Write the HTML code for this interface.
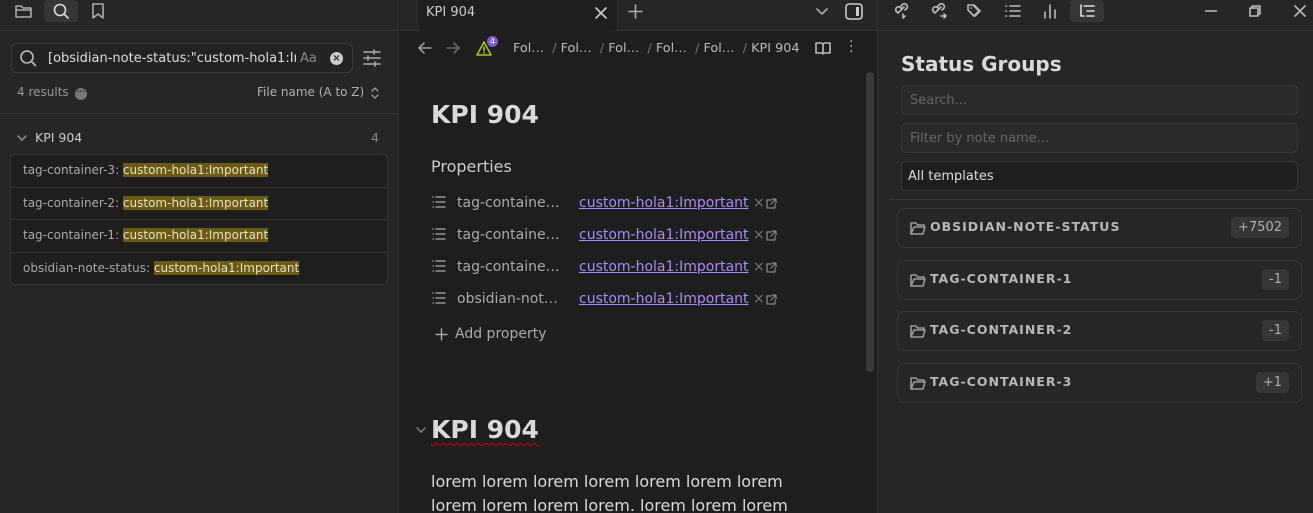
<!DOCTYPE html>
<html><head><style>
*{box-sizing:border-box;margin:0;padding:0}
html,body{width:1313px;height:513px;overflow:hidden}
body{background:#1e1e1e;font-family:"DejaVu Sans","Liberation Sans",sans-serif;color:#dadada;position:relative}
.a{position:absolute}
svg{position:absolute;fill:none;stroke:currentColor;stroke-width:1.6;stroke-linecap:round;stroke-linejoin:round}
.hl{background:#6b5a14;color:#e6e0c8}
.lnk{color:#a88bfa;text-decoration:underline}
.card{position:absolute;left:897px;width:405px;height:40px;border:1px solid #363636;border-radius:8px;background:#262626}
.card .t{position:absolute;left:32px;top:10px;font-weight:bold;font-size:12.5px;letter-spacing:1px;color:#b8b8b8}
.card .b{position:absolute;top:8px;right:12px;height:21px;padding:0 7px;background:#363636;border-radius:4px;font-size:13px;color:#b0b0b0;line-height:21px}
.card svg{left:12px;top:12px;color:#999}
</style></head><body>
<!-- left panel -->
<div class="a" style="left:0;top:0;width:399px;height:513px;background:#262626;border-right:1px solid #333"></div>
<div class="a" style="left:0;top:30px;width:399px;height:1px;background:#333"></div>
<div class="a" style="left:44px;top:0;width:34px;height:22px;background:#363636;border-radius:4px"></div>
<svg style="left:15px;top:3px;color:#aaa" width="18" height="16" viewBox="0 0 18 16"><path d="M1 3h5l2 2h8v9H1z M1 7h15"/></svg>
<svg style="left:52px;top:3px;color:#ddd" width="18" height="16" viewBox="0 0 18 16"><circle cx="8" cy="7" r="5.5"/><path d="M12 11l4 4"/></svg>
<svg style="left:90px;top:2px;color:#aaa" width="16" height="18" viewBox="0 0 16 18"><path d="M3 2h10v14l-5-4-5 4z"/></svg>
<div class="a" style="left:11px;top:43px;width:342px;height:30px;border:1px solid #3a3a3a;border-radius:6px;background:#232323"></div>
<svg style="left:19px;top:49px;color:#bbb" width="18" height="18" viewBox="0 0 18 18"><circle cx="8" cy="8" r="6"/><path d="M12.5 12.5l4 4"/></svg>
<div class="a" style="left:48px;top:51px;font-size:13px;color:#ddd;white-space:nowrap;width:248px;overflow:hidden">[obsidian-note-status:"custom-hola1:Important</div>
<div class="a" style="left:300px;top:51px;font-size:13px;color:#888">Aa</div>
<div class="a" style="left:330px;top:52px;width:13px;height:13px;border-radius:50%;background:#ccc;color:#262626;font-size:10px;line-height:13px;text-align:center;font-weight:bold">×</div>
<svg style="left:363px;top:49px;color:#aaa" width="18" height="18" viewBox="0 0 18 18"><path d="M1 3h16M1 9h16M1 15h16"/><path d="M11 1v4M5 7v4M12 13v4" /></svg>
<div class="a" style="left:17px;top:85px;font-size:12px;color:#9a9a9a">4 results</div>
<div class="a" style="left:75px;top:88px;width:12px;height:12px;border-radius:50%;background:#777;color:#333;font-size:8px;line-height:8px;text-align:center;font-weight:bold">···</div>
<div class="a" style="left:257px;top:85px;font-size:12px;color:#b0b0b0">File name (A to Z)</div>
<svg style="left:371px;top:87px;color:#999;stroke-width:1.3" width="8" height="12" viewBox="0 0 8 12"><path d="M1 4l3-3 3 3M1 8l3 3 3-3"/></svg>
<div class="a" style="left:0;top:113px;width:398px;height:1px;background:#333"></div>
<svg style="left:17px;top:134px;color:#888" width="10" height="8" viewBox="0 0 10 8"><path d="M1 2l4 4 4-4"/></svg>
<div class="a" style="left:35px;top:130px;font-size:12.5px;color:#ccc">KPI 904</div>
<div class="a" style="left:371px;top:130px;font-size:12.5px;color:#888">4</div>
<div class="a" style="left:10px;top:154px;width:378px;height:131px;background:#1e1e1e;border:1px solid #363636;border-radius:5px"></div>
<div class="a" style="left:11px;top:187px;width:376px;height:1px;background:#333"></div>
<div class="a" style="left:11px;top:219px;width:376px;height:1px;background:#333"></div>
<div class="a" style="left:11px;top:252px;width:376px;height:1px;background:#333"></div>
<div class="a" style="left:23px;top:163px;font-size:12px;color:#aaa">tag-container-3: <span class="hl">custom-hola1:Important</span></div>
<div class="a" style="left:23px;top:196px;font-size:12px;color:#aaa">tag-container-2: <span class="hl">custom-hola1:Important</span></div>
<div class="a" style="left:23px;top:228px;font-size:12px;color:#aaa">tag-container-1: <span class="hl">custom-hola1:Important</span></div>
<div class="a" style="left:23px;top:261px;font-size:12px;color:#aaa">obsidian-note-status: <span class="hl">custom-hola1:Important</span></div>

<!-- middle -->
<div class="a" style="left:400px;top:0;width:477px;height:31px;background:#262626;border-bottom:1px solid #333"></div>
<div class="a" style="left:417px;top:0;width:201px;height:32px;background:#1e1e1e;border-radius:0 0 6px 6px;border:1px solid #333;border-top:none;border-bottom:none"></div>
<div class="a" style="left:426px;top:5px;font-size:13px;color:#ccc">KPI 904</div>
<svg style="left:595px;top:7px;color:#ccc" width="12" height="12" viewBox="0 0 12 12"><path d="M1 1l10 10M11 1L1 11"/></svg>
<svg style="left:628px;top:4px;color:#aaa" width="15" height="15" viewBox="0 0 15 15"><path d="M7.5 1v13M1 7.5h13"/></svg>
<svg style="left:816px;top:8px;color:#aaa" width="12" height="8" viewBox="0 0 12 8"><path d="M1 1l5 5 5-5"/></svg>
<svg style="left:845px;top:3px;color:#ccc" width="18" height="17" viewBox="0 0 18 17"><rect x="1" y="1" width="16" height="15" rx="3"/><rect x="11" y="4" width="3" height="9" fill="#ccc" stroke="none"/></svg>
<div class="a" style="left:877px;top:0;width:1px;height:513px;background:#333"></div>
<svg style="left:418px;top:42px;color:#999" width="14" height="12" viewBox="0 0 14 12"><path d="M13 6H1M6 1L1 6l5 5"/></svg>
<svg style="left:446px;top:42px;color:#666" width="14" height="12" viewBox="0 0 14 12"><path d="M1 6h12M8 1l5 5-5 5"/></svg>
<svg style="left:476px;top:41px;color:#a5c221" width="16" height="15" viewBox="0 0 16 15"><path d="M8 1L1 14h14z M8 6v3.5M8 11.5v.5"/></svg>
<div class="a" style="left:487px;top:36px;width:11px;height:11px;border-radius:50%;background:#7e5bd6;color:#fff;font-size:8px;line-height:11px;text-align:center">4</div>
<div class="a" style="left:513px;top:41px;font-size:12.8px;color:#bbb;white-space:nowrap">Fol… <span style="color:#777">&nbsp;/</span> Fol… <span style="color:#777">&nbsp;/</span> Fol… <span style="color:#777">&nbsp;/</span> Fol… <span style="color:#777">&nbsp;/</span> Fol… <span style="color:#777">&nbsp;/</span> KPI 904</div>
<svg style="left:815px;top:42px;color:#bbb" width="16" height="13" viewBox="0 0 16 13"><path d="M1 1h5a2 2 0 0 1 2 2v9M15 1h-5a2 2 0 0 0-2 2M1 1v10h14V1"/></svg>
<div class="a" style="left:849px;top:40px;font-size:14px;color:#bbb;line-height:5px;width:4px">·<br>·<br>·</div>
<div class="a" style="left:866px;top:72px;width:8px;height:300px;background:#3a3a3a;border-radius:4px"></div>
<div class="a" style="left:431px;top:100px;font-size:25px;font-weight:bold;color:#dadada">KPI 904</div>
<div class="a" style="left:431px;top:157px;font-size:16px;color:#ccc">Properties</div>
<div class="a" style="left:432px;top:188px;line-height:32px">
<svg style="left:0;top:8px;color:#aaa;stroke-width:1.3" width="14" height="12" viewBox="0 0 14 12"><path d="M1 1h.3M1 6h.3M1 11h.3M4 1h9M4 6h9M4 11h9"/></svg>
<svg style="left:0;top:40px;color:#aaa;stroke-width:1.3" width="14" height="12" viewBox="0 0 14 12"><path d="M1 1h.3M1 6h.3M1 11h.3M4 1h9M4 6h9M4 11h9"/></svg>
<svg style="left:0;top:72px;color:#aaa;stroke-width:1.3" width="14" height="12" viewBox="0 0 14 12"><path d="M1 1h.3M1 6h.3M1 11h.3M4 1h9M4 6h9M4 11h9"/></svg>
<svg style="left:0;top:104px;color:#aaa;stroke-width:1.3" width="14" height="12" viewBox="0 0 14 12"><path d="M1 1h.3M1 6h.3M1 11h.3M4 1h9M4 6h9M4 11h9"/></svg>
</div>
<div class="a" style="left:457px;top:187px;font-size:14px;color:#aaa;line-height:32px">
<div>tag-containe…</div><div>tag-containe…</div><div>tag-containe…</div><div>obsidian-not…</div></div>
<div class="a" style="left:579px;top:187px;font-size:14px;line-height:32px">
<div><span class="lnk">custom-hola1:Important</span> <span style="color:#777">×</span></div>
<div><span class="lnk">custom-hola1:Important</span> <span style="color:#777">×</span></div>
<div><span class="lnk">custom-hola1:Important</span> <span style="color:#777">×</span></div>
<div><span class="lnk">custom-hola1:Important</span> <span style="color:#777">×</span></div></div>
<svg style="left:766px;top:198px;color:#888;stroke-width:1.2" width="11" height="11" viewBox="0 0 11 11"><path d="M5 2H1v8h8V6M6 1h4v4M10 1L5 6"/></svg>
<svg style="left:766px;top:230px;color:#888;stroke-width:1.2" width="11" height="11" viewBox="0 0 11 11"><path d="M5 2H1v8h8V6M6 1h4v4M10 1L5 6"/></svg>
<svg style="left:766px;top:262px;color:#888;stroke-width:1.2" width="11" height="11" viewBox="0 0 11 11"><path d="M5 2H1v8h8V6M6 1h4v4M10 1L5 6"/></svg>
<svg style="left:766px;top:294px;color:#888;stroke-width:1.2" width="11" height="11" viewBox="0 0 11 11"><path d="M5 2H1v8h8V6M6 1h4v4M10 1L5 6"/></svg>
<svg style="left:435px;top:328px;color:#aaa;stroke-width:1.4" width="13" height="13" viewBox="0 0 13 13"><path d="M6.5 1v11M1 6.5h11"/></svg>
<div class="a" style="left:455px;top:326px;font-size:14px;color:#aaa">Add property</div>
<svg style="left:416px;top:427px;color:#777" width="10" height="7" viewBox="0 0 10 7"><path d="M1 1l4 4 4-4"/></svg>
<div class="a" style="left:431px;top:415px;font-size:25px;font-weight:bold;color:#dadada;text-decoration:underline wavy #c00;text-decoration-thickness:1px;text-underline-offset:4px">KPI 904</div>
<div class="a" style="left:431px;top:470px;font-size:16px;color:#dadada;line-height:24px;white-space:nowrap">lorem lorem lorem lorem lorem lorem lorem<br>lorem lorem lorem lorem. lorem lorem lorem</div>

<!-- right -->
<div class="a" style="left:878px;top:0;width:435px;height:513px;background:#262626"></div>
<div class="a" style="left:878px;top:30px;width:435px;height:1px;background:#333"></div>
<div class="a" style="left:1070px;top:0;width:34px;height:22px;background:#363636;border-radius:4px"></div>
<svg style="left:893px;top:3px;color:#bbb" width="18" height="16" viewBox="0 0 18 16"><path d="M5 10l-2-2a3 3 0 0 1 4-4l2 2M8 3l2-2a3 3 0 0 1 4 4l-2 2M6 9l5-5M10 11v4M10 15l2-2"/></svg>
<svg style="left:930px;top:3px;color:#bbb" width="18" height="16" viewBox="0 0 18 16"><path d="M5 10l-2-2a3 3 0 0 1 4-4l2 2M8 3l2-2a3 3 0 0 1 4 4l-2 2M6 9l5-5M11 13h5M14 11l2 2-2 2"/></svg>
<svg style="left:967px;top:3px;color:#bbb" width="18" height="16" viewBox="0 0 18 16"><path d="M1 2v5l6 6 5-5-6-6z M7 2l6 6-5 5 M4 5h.5"/></svg>
<svg style="left:1005px;top:4px;color:#bbb" width="16" height="14" viewBox="0 0 16 14"><path d="M1 2h.5M1 7h.5M1 12h.5M5 2h10M5 7h10M5 12h10"/></svg>
<svg style="left:1043px;top:3px;color:#bbb" width="14" height="16" viewBox="0 0 14 16"><path d="M2 15V9M7 15V2M12 15V7"/></svg>
<svg style="left:1079px;top:4px;color:#ddd" width="16" height="14" viewBox="0 0 16 14"><path d="M2 1v11h3M5 2h10M8 7h7M8 12h7"/></svg>
<svg style="left:1205px;top:10px;color:#bbb" width="12" height="2" viewBox="0 0 12 2"><path d="M0 1h12"/></svg>
<svg style="left:1249px;top:5px;color:#bbb" width="12" height="12" viewBox="0 0 12 12"><rect x="1" y="3" width="8" height="8"/><path d="M3 3V1h8v8H9"/></svg>
<svg style="left:1294px;top:5px;color:#bbb" width="12" height="12" viewBox="0 0 12 12"><path d="M1 1l10 10M11 1L1 11"/></svg>
<div class="a" style="left:901px;top:52px;font-size:20px;font-weight:bold;color:#dadada">Status Groups</div>
<div class="a" style="left:901px;top:85px;width:397px;height:30px;border:1px solid #363636;border-radius:5px;background:#2a2a2a;font-size:13px;color:#666;padding:7px 8px">Search...</div>
<div class="a" style="left:901px;top:123px;width:397px;height:30px;border:1px solid #363636;border-radius:5px;background:#2a2a2a;font-size:13px;color:#666;padding:7px 8px">Filter by note name...</div>
<div class="a" style="left:901px;top:161px;width:397px;height:30px;border:1px solid #3a3a3a;border-radius:4px;background:#1e1e1e;font-size:13px;color:#ddd;padding:7px 6px">All templates</div>
<div class="a" style="left:889px;top:199px;width:424px;height:1px;background:#363636"></div>
<div class="card" style="top:208px"><svg width="16" height="14" viewBox="0 0 16 14"><path d="M1 2h5l1.5 2H14v2M1 2v11h12l2-7H4l-3 7"/></svg><div class="t">OBSIDIAN-NOTE-STATUS</div><div class="b">+7502</div></div>
<div class="card" style="top:260px"><svg width="16" height="14" viewBox="0 0 16 14"><path d="M1 2h5l1.5 2H14v2M1 2v11h12l2-7H4l-3 7"/></svg><div class="t">TAG-CONTAINER-1</div><div class="b">-1</div></div>
<div class="card" style="top:311px"><svg width="16" height="14" viewBox="0 0 16 14"><path d="M1 2h5l1.5 2H14v2M1 2v11h12l2-7H4l-3 7"/></svg><div class="t">TAG-CONTAINER-2</div><div class="b">-1</div></div>
<div class="card" style="top:363px"><svg width="16" height="14" viewBox="0 0 16 14"><path d="M1 2h5l1.5 2H14v2M1 2v11h12l2-7H4l-3 7"/></svg><div class="t">TAG-CONTAINER-3</div><div class="b">+1</div></div>
</body></html>
